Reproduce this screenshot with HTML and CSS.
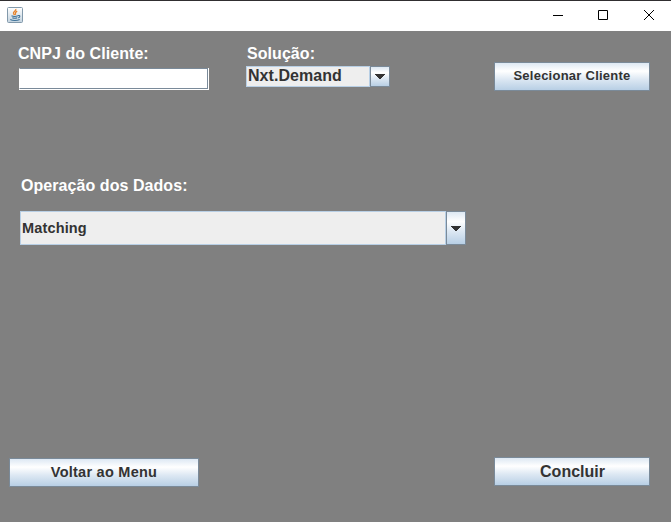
FILE: index.html
```html
<!DOCTYPE html>
<html lang="pt-BR">
<head>
<meta charset="utf-8">
<title>Cliente</title>
<link rel="stylesheet" href="styles.css">
</head>
<body>
<div class="window">
  <header class="titlebar">
    <svg class="app-icon" width="16" height="16" viewBox="0 0 16 16">
      <defs><linearGradient id="tile" x1="0" y1="0" x2="0" y2="1"><stop offset="0" stop-color="#fff"/><stop offset="1" stop-color="#c3d3df"/></linearGradient></defs>
      <rect x=".5" y=".5" width="15" height="15" rx="1" fill="url(#tile)" stroke="#8299ab"/>
      <path d="M8.800 2c.7 2-3 2.700-2.300 4.500l1 1.700M10.200 4.200C7.500 5.500 8.300 6.200 8.600 7.800" fill="none" stroke="#e8842c" stroke-width="1.300"/>
      <path d="M4.500 8.800c1.500.8 4.500.8 6.500 0M5.300 10.700c1.500.6 3.500.6 5 0M3.300 12.500c2 1.300 7 1.300 9.400 0M11 8.600c2.500-.6 2.300 1.700.3 2.300" fill="none" stroke="#3f7299" stroke-width="1.100"/>
    </svg>
    <div class="controls">
      <svg width="10" height="10" viewBox="0 0 10 10"><path d="M0 5.500h10"/></svg>
      <svg width="10" height="10" viewBox="0 0 10 10"><path d="M.5.5h9v9h-9z"/></svg>
      <svg width="10" height="10" viewBox="0 0 10 10"><path d="M0 0l10 10M10 0L0 10"/></svg>
    </div>
  </header>
  <main class="panel">
    <section class="client-row">
      <div class="cnpj">
        <label class="label" for="cnpj">CNPJ do Cliente:</label>
        <div class="etched"><input id="cnpj" class="input" type="text"></div>
      </div>
      <div class="solution">
        <span class="label">Solução:</span>
        <div class="combo combo-small">
          <span class="value">Nxt.Demand</span>
          <span class="arrow"><svg width="10" height="5" viewBox="0 0 10 5" shape-rendering="crispEdges"><path d="M0 0h10v1H9v1H8v1H7v1H6v1H4V4H3V3H2V2H1V1H0z"/></svg></span>
        </div>
      </div>
      <button class="button select-client">Selecionar Cliente</button>
    </section>
    <section class="operation">
      <span class="label">Operação dos Dados:</span>
      <div class="combo combo-large">
        <span class="value">Matching</span>
        <span class="arrow"><svg width="10" height="5" viewBox="0 0 10 5" shape-rendering="crispEdges"><path d="M0 0h10v1H9v1H8v1H7v1H6v1H4V4H3V3H2V2H1V1H0z"/></svg></span>
      </div>
    </section>
    <footer class="actions">
      <button class="button back">Voltar ao Menu</button>
      <button class="button finish">Concluir</button>
    </footer>
  </main>
</div>
</body>
</html>
```
FILE: styles.css
```css
* { box-sizing: border-box; }
body { margin: 0; font-family: "Liberation Sans", Arial, sans-serif; font-weight: bold; color: #333; }
.window { width: 671px; height: 522px; display: flex; flex-direction: column; overflow: hidden; }
.titlebar { height: 31px; flex: none; display: flex; justify-content: space-between; align-items: flex-start; background: #fff; border-top: 1px solid #302e30; padding: 6px 17px 0 7px; }
.app-icon { display: block; }
.controls { display: flex; gap: 35px; padding-top: 3px; }
.controls svg { display: block; fill: none; stroke: #000; stroke-width: 1; }
.controls svg:last-child { margin-left: 1px; }
.panel { flex: 1; background: #808080; display: flex; flex-direction: column; }
.label { display: block; color: #fff; font-size: 16px; line-height: 18px; letter-spacing: .06px; white-space: nowrap; }
.client-row { display: flex; align-items: flex-start; padding: 14px 21px 0 18px; height: 146px; }
.cnpj { width: 228px; }
.etched { width: 190px; height: 22px; margin: 5px 0 0 1px; border: solid #fff; border-width: 0 1px 1px 0; }
.input { display: block; width: 189px; height: 21px; padding: 0 2px; border: 1px solid #7a8a99; border-left-color: #fff; border-radius: 0; outline: none; background: #fff; font: inherit; }
.solution .label { padding-left: 1px; }
.combo { display: flex; }
.value { flex: 1; display: flex; align-items: center; border: 1px solid #b8cfe5; background: #eee; white-space: nowrap; }
.arrow { display: flex; align-items: center; justify-content: center; border: 1px solid #7a8a99; background: linear-gradient(#dde8f3 0, #fff 30%, #dde8f3 60%, #b8cfe5 100%); }
.arrow svg { fill: #333; }
.combo-small { width: 144px; height: 21px; margin-top: 3px; }
.combo-small .value { font-size: 16px; line-height: 17px; padding: 0 0 2px 1px; letter-spacing: .06px; }
.combo-small .arrow { width: 20px; }
.combo-large { width: 446px; height: 34px; margin: 16px 0 0 -1px; }
.combo-large .value { font-size: 14.500px; padding: 0 0 1px 1px; letter-spacing: .15px; }
.combo-large .arrow { width: 20px; }
.button { padding: 0 0 2px; border: 1px solid #7a8a99; border-radius: 0; background: linear-gradient(#dde8f3 0, #fff 30%, #dde8f3 60%, #b8cfe5 100%); color: #333; font-family: inherit; font-weight: bold; height: 29px; white-space: nowrap; }
.select-client { width: 156px; margin: 17px 0 0 auto; font-size: 13px; letter-spacing: .25px; }
.operation { padding-left: 21px; }
.actions { margin-top: auto; display: flex; justify-content: space-between; align-items: flex-start; padding: 0 21px 35px 9px; }
.back { width: 190px; margin-top: 1px; font-size: 14.500px; letter-spacing: .25px; }
.finish { width: 156px; padding: 0 0 0 1px; font-size: 16px; }
```
